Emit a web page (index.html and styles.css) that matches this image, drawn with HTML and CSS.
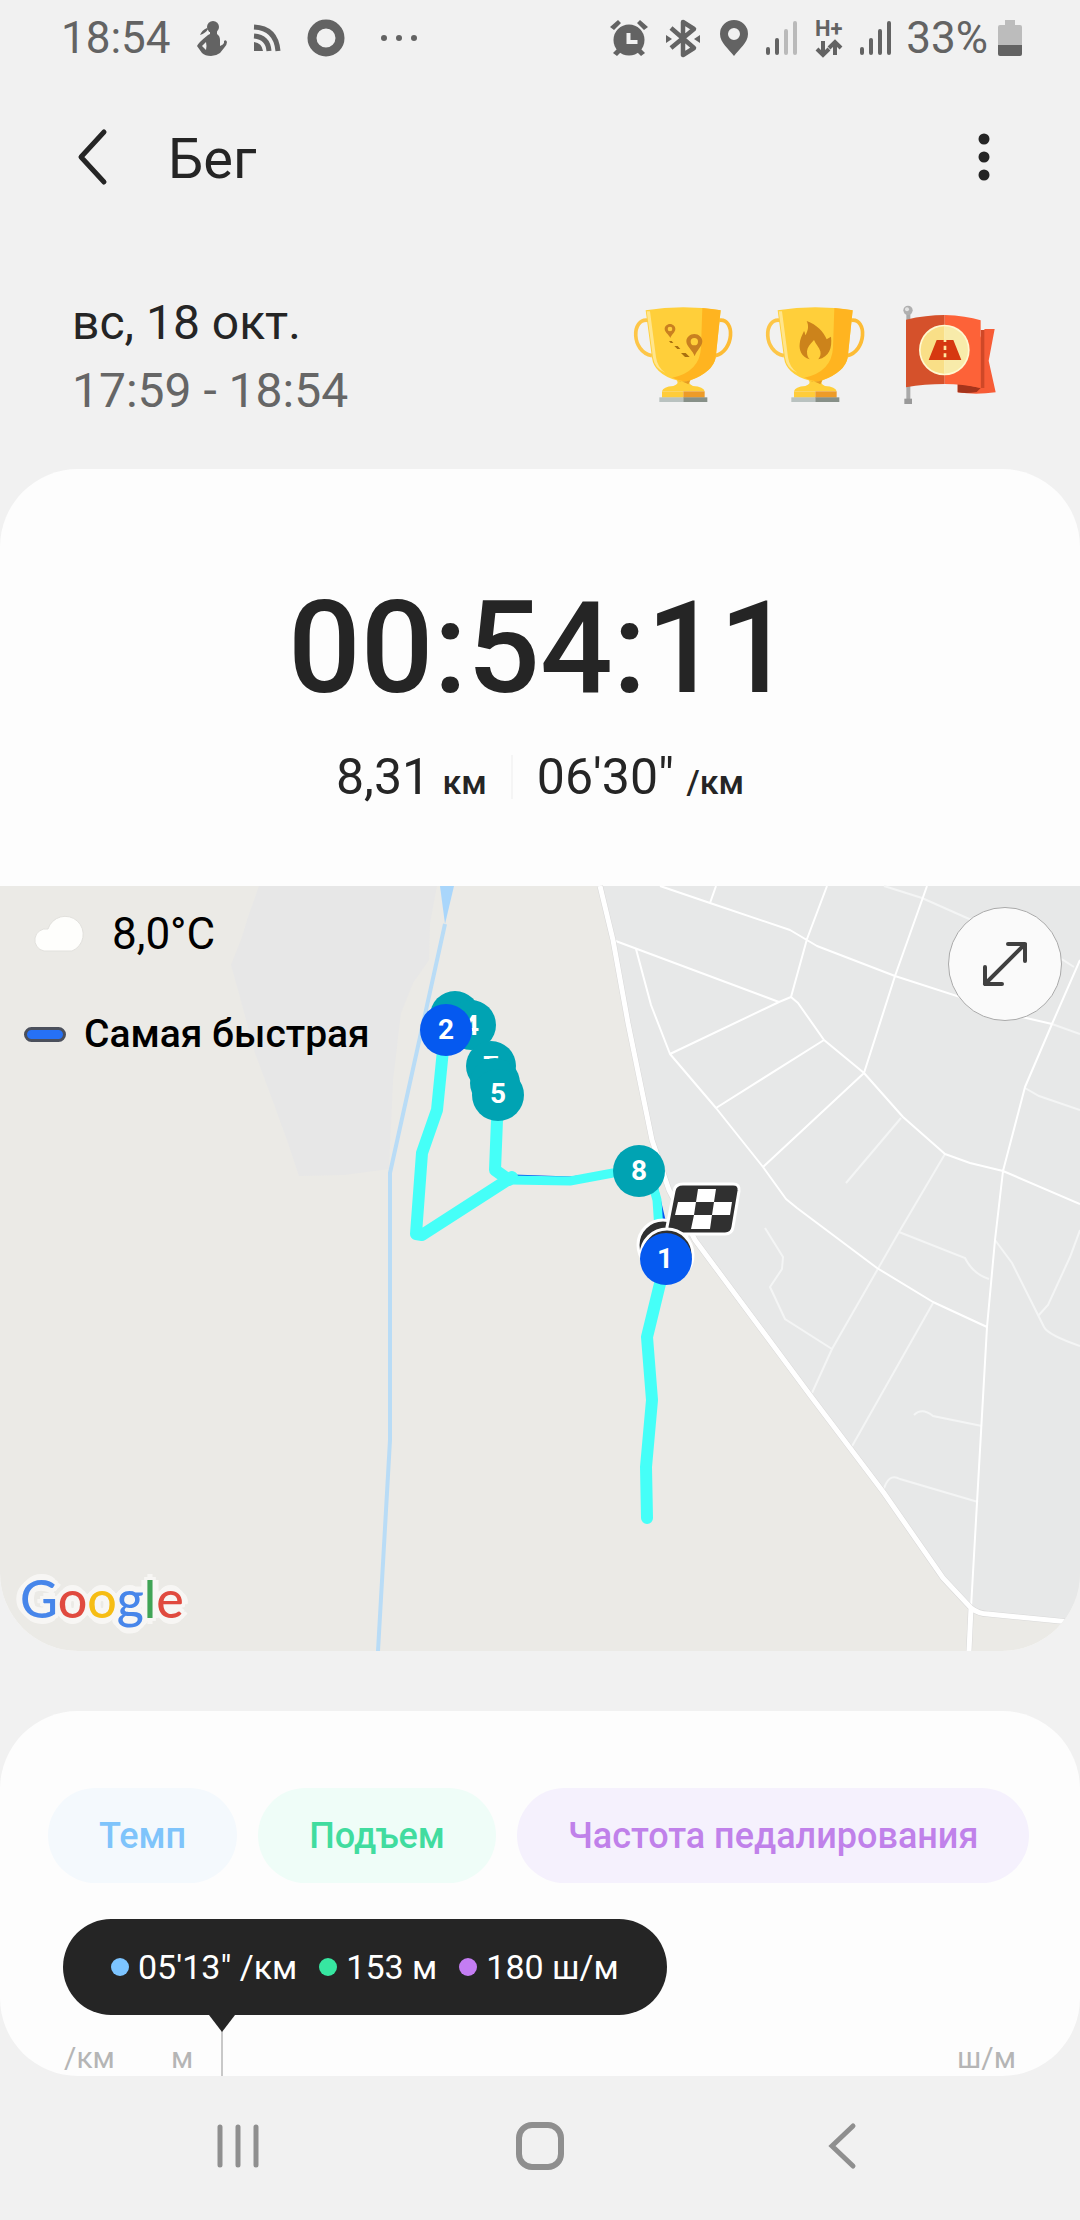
FILE: index.html
```html
<!DOCTYPE html>
<html lang="ru">
<head>
<meta charset="utf-8">
<meta name="viewport" content="width=device-width, initial-scale=1">
<title>Бег</title>
<link rel="stylesheet" href="styles.css">
</head>
<body>
<div class="screen">
  <div class="status-bar">
    <div class="status-group status-left">
      <span>18:54</span>
      <svg width="30" height="36" viewBox="0 0 30 36" fill="#636363"><circle cx="16" cy="7" r="6"/><path fill-rule="evenodd" d="M13 10h7v4q3 2 3 6v6q3-1 4-3v-2q2-2 3 1 0 3-3 6l-4 5q-4 3-9 3-6 0-9-3L0 26q1-3 11-11l2-1zM11 9q-2 4-8 6 2-5 7-7zM9 22l-4 4 4 4q1-4 0-8z"/></svg>
      <svg width="28" height="28" viewBox="0 0 28 28" fill="none" stroke="#636363" stroke-width="5"><path d="M1 3q22 1 24 24M1 12q14 1 15 15"/><path d="M1 18q8 1 9 9H1z" fill="#636363" stroke="none"/></svg>
      <svg width="38" height="38" viewBox="0 0 38 38"><circle cx="19" cy="19" r="14" fill="none" stroke="#636363" stroke-width="9"/></svg>
      <svg width="36" height="8" viewBox="0 0 36 8" fill="#636363"><circle cx="3" cy="4" r="3"/><circle cx="18" cy="4" r="3"/><circle cx="33" cy="4" r="3"/></svg>
    </div>
    <div class="status-group status-right">
      <svg width="38" height="36" viewBox="0 0 38 36" fill="#636363"><circle cx="19" cy="20" r="15.500"/><path d="M8 0l3 3-7 7-4-3zM30 0l8 7-4 3-7-7zM7 29l4 3-4 4-4-3zM31 29l4 4-4 3-4-4z"/><path d="M18.500 13v9h9" fill="none" stroke="#f1f1f1" stroke-width="4"/></svg>
      <svg width="36" height="38" viewBox="0 0 36 38"><path d="M5 9l23 20-11 7V3l11 7L5 29" fill="none" stroke="#636363" stroke-width="4.500" stroke-linejoin="round"/><path d="M0 16l6 4-6 4zM34 16l-6 4 6 4z" fill="#636363"/></svg>
      <svg width="28" height="36" viewBox="0 0 28 36"><path fill="#636363" fill-rule="evenodd" d="M14 0a14 14 0 0 1 14 14c0 9-9 15-14 22C9 29 0 23 0 14A14 14 0 0 1 14 0zm0 8a6 6 0 1 0 0 12 6 6 0 0 0 0-12z"/></svg>
      <svg width="32" height="34" viewBox="0 0 32 34" stroke-width="4" stroke-linecap="round" stroke="#636363"><path d="M2 28v4M11 19v13"/><path d="M20 10v22M29 2v30" stroke="#bababa"/></svg>
      <svg width="26" height="38" viewBox="0 0 26 38"><text x="-1" y="17" class="network">H+</text><path d="M7 22v12M1 30l6 6 6-6M19 36V24M13 29l6-6 6 6" fill="none" stroke="#636363" stroke-width="4"/></svg>
      <svg width="32" height="34" viewBox="0 0 32 34" stroke-width="4" stroke-linecap="round" stroke="#636363"><path d="M2 28v4M11 19v13M20 10v22M29 2v30"/></svg>
      <span class="battery"><span>33%</span>
      <svg width="24" height="36" viewBox="0 0 24 36"><path d="M7 0h10v5h5q2 0 2 2v18H0V7q0-2 2-2h5z" fill="#bcbcbc"/><path d="M0 25h24v9q0 2-2 2H2q-2 0-2-2z" fill="#636363"/></svg></span>
    </div>
  </div>

  <header class="app-bar">
    <button class="icon-button" aria-label="Назад"><svg width="32" height="56" viewBox="0 0 32 56"><path d="M28 3L5 28l23 25" fill="none" stroke="#252525" stroke-width="5" stroke-linecap="round" stroke-linejoin="round"/></svg></button>
    <h1>Бег</h1>
    <button class="icon-button more" aria-label="Ещё"><svg width="12" height="48" viewBox="0 0 12 48" fill="#252525"><circle cx="6" cy="6" r="5.500"/><circle cx="6" cy="24" r="5.500"/><circle cx="6" cy="42" r="5.500"/></svg></button>
  </header>

  <section class="summary">
    <div>
      <div class="date">вс, 18 окт.</div>
      <div class="period">17:59 - 18:54</div>
    </div>
    <div class="awards">
      <svg width="100" height="98" viewBox="100 78 300 294">
        <defs><g id="cup">
          <path d="M142 121c-50-8-52 94 12 106" fill="none" stroke="#fdc648" stroke-width="11"/><path d="M355 121c50-8 46 94-12 106" fill="none" stroke="#fdbc35" stroke-width="11"/>
          <path d="M135 91q113-18 225 0l-15 142q-8 42-76 68-8 11 8 17 32 2 35 16H184q3-14 34-16 19-6 10-17-68-20-74-68z" fill="#ffcf3a"/>
          <path d="M305 84q30 2 55 7l-15 142q-8 42-76 68-10 6-34 0l-20-8q82-18 86-90z" fill="#ffb420"/>
          <path d="M138 94h10l18 138q5 32 28 46-32-12-37-45z" fill="#ffe58c"/>
          <path d="M231 302q18 6 38-1l-6 12q-10-8-32-11z" fill="#e59a22"/>
          <path d="M184 334h64v19h-64z" fill="#ffcc3b"/><path d="M248 334h64v19h-64z" fill="#ed9b28"/>
          <path d="M176 352h72v14h-72z" fill="#b9c2c0"/><path d="M248 352h72v14h-72z" fill="#879088"/>
        </g></defs>
        <use href="#cup"/>
        <path fill="#c98020" fill-rule="evenodd" d="M208 132c9 0 16 7 16 15 0 10-12 17-15 27-4-10-17-17-17-27 0-8 7-15 16-15zm0 8a7 7 0 1 0 0 14 7 7 0 0 0 0-14zM281 162c13 0 24 10 24 22 0 16-18 28-23 45-5-17-25-29-25-45 0-12 11-22 24-22zm0 12a11 11 0 1 0 0 22 11 11 0 0 0 0-22z"/>
        <path d="M205 183h8l5 6h-8zM221 198h10l8 9h-9zM241 219h14l12 12h-14z" fill="#a8700f"/>
      </svg>
      <svg width="100" height="98" viewBox="100 78 300 294">
        <use href="#cup"/>
        <path d="M222 123c30 10 52 34 60 55l13-8c4 34-5 60-38 68 6-8 8-14 6-24-3-12-14-22-19-34-12 12-20 22-21 34 0 12 2 18 8 24-25-8-32-28-30-46 1-14 7-26 13-39 3 4 3 10 4 13 9-16 11-28 4-43z" fill="#cc831b"/>
      </svg>
      <svg width="98" height="98" viewBox="892 78 294 294">
        <path d="M917 100h12v260h-12z" fill="#a9a9a9"/><circle cx="922" cy="91" r="14" fill="#b0b0b0"/><circle cx="919" cy="88" r="6" fill="#e3e3e3"/><path d="M911 356h23v16h-23z" fill="#999"/>
        <path d="M1071 300l81-153h30l-18 95 21 95q-60 8-114 0z" fill="#f75c36"/><path d="M1140 150h11v174h-11z" fill="#cf4827"/><path d="M1071 310l69 14-12 12q-30 6-57 1z" fill="#a5341b"/>
        <path d="M916 119q60-14 116-14v207q-60 0-116 10z" fill="#d5512b"/><path d="M1032 105q64 2 108 16v203q-54-12-108-12z" fill="#fd6238"/>
        <circle cx="1031" cy="210" r="76" fill="#fff8d0"/><path d="M1031 139a71 71 0 0 0 0 142z" fill="#f9df87"/><path d="M1031 139a71 71 0 0 1 0 142z" fill="#f8ebaa"/>
        <path d="M1008 180h50l24 60h-98z" fill="#d63810"/><path d="M1029 179h8v7h-8zM1029 197h8v13h-8zM1029 220h8v12h-8z" fill="#ffe8a0"/>
      </svg>
    </div>
  </section>

  <main>
    <section class="card workout">
      <div class="timer">00:54:11</div>
      <div class="stats">
        <div class="stat">8,31 <small>км</small></div>
        <div class="stat-divider"></div>
        <div class="stat">06'30" <small>/км</small></div>
      </div>
      <div class="map">
        <svg class="map-canvas" viewBox="0 0 1080 765" preserveAspectRatio="xMidYMid slice">
          <path d="M0 0h1080v765H0z" fill="#ebeae6"/>
          <path d="M259 0l-11 31-7 23-10 25 7 25 17 63 20 54 13 36 11 33 45-1 45-6 4-89 8-67 12-30 16-23 1-37 7-37z" fill="#e7e7e7"/>
          <path d="M600 0l13 54 15 83 24 117 17 50 26 50 115 155 74 98 59 85 28 30 17 6 92 9V0z" fill="#e7e8e8"/>
          <path d="M440 0h14l-9 38z" fill="#a9d6fb"/>
          <path d="M445 38l-55 249v267l-12 211" fill="none" stroke="#b9dcf6" stroke-width="4"/>
          <g fill="none" stroke="#f4f5f5" stroke-width="2">
            <path d="M884 0l38 12 45 20 96 42 11 7M1052 138l28 10M1025 202l14 8 41 14M901 232l-55 65M945 268l-46 78-67 117-20 44M899 346l66 26q8 16 24 21M765 342l18 29-1 12-12 18 15 32 47 30M933 417l-82 145M914 529q8-8 19 1l49 10M883 606q5-20 17-13l78 23M995 354l17 23 32 64q4 8 36 19M1038 430l10-11 22-48 10-27"/>
          </g>
          <g fill="none" stroke="#fff" stroke-width="2" stroke-linejoin="round">
            <path d="M660 0l50 17 80 27 27 16 78 30 127 41 30 7M716 0l-6 17M827 0l-20 53-16 58-12 5L613 54M791 111l7 6 26 37 40 33 39 44 42 37 25 9 33 8 77 33M927 0l-32 90-31 97-101 94M636 63l15 56 19 49 46 54 47 59 23 32 11 9 80 60 56 34 54 25M670 168l109-52M716 222l108-68M1080 74l-28 64-27 63-22 84-8 69-8 87-16 281"/>
          </g>
          <path d="M600 0l13 54 15 83 24 117 17 50 26 50 115 155 74 98 59 85 28 30q8 6 17 6l92 9M971 722l-2 43" fill="none" stroke="#d8d8d8" stroke-width="6"/>
          <path d="M600 0l13 54 15 83 24 117 17 50 26 50 115 155 74 98 59 85 28 30q8 6 17 6l92 9M971 722l-2 43" fill="none" stroke="#fff" stroke-width="5"/>
          <g fill="none" stroke-linejoin="round" stroke-linecap="round">
            <path d="M507 293l6-2 57 2 43-5 26-1M655 300l8 34" stroke="#0559f0" stroke-width="5"/>
            <path d="M510 294l60 1 43-8 26-1M652 296l5 18 2 30" stroke="#45fff8" stroke-width="9"/>
            <path d="M445 144l-3 30-5 50-15 43-6 81 6 1 90-58M498 209l-3 75 14 10M666 373l-19 78 5 63-6 67 1 51" stroke="#45fff8" stroke-width="12"/>
          </g>
          <g fill="#303030" stroke="#fff" stroke-width="3">
            <circle cx="663" cy="359" r="25"/>
            <path d="M683 298h50q7 0 6 7l-6 36q-1 7-8 7h-52q-7 0-6-7l7-36q1-7 9-7z"/>
            <path d="M698 303h18l-2 13h-18zM678 316h18l-2 13h-19zM714 316h18l-2 13h-18zM694 329h18l-2 14h-19z" fill="#fff" stroke="none"/>
            <circle cx="667" cy="369" r="26"/>
          </g>
          <g class="marks">
            <circle cx="455" cy="130" r="25" fill="#00a3b3"/><text x="455" y="140">3</text>
            <circle cx="471" cy="139" r="25" fill="#00a3b3"/><text x="471" y="149">4</text>
            <circle cx="446" cy="144" r="26" fill="#0559f0"/><text x="446" y="153">2</text>
            <circle cx="491" cy="180" r="25" fill="#00a3b3"/><text x="491" y="190">7</text>
            <circle cx="495" cy="197" r="25" fill="#00a3b3"/>
            <circle cx="498" cy="209" r="26" fill="#00a3b3"/><text x="498" y="217">5</text>
            <circle cx="639" cy="285" r="26" fill="#00a3b3"/><text x="639" y="294">8</text>
            <circle cx="666" cy="373" r="26" fill="#0559f0"/><text x="665" y="382">1</text>
          </g>
        </svg>
        <div class="map-info">
          <div class="weather">
            <svg width="52" height="36" viewBox="0 0 52 36"><path d="M12 35a11 11 0 1 1 4-22 18 18 0 1 1 24 22z" fill="#fefefc" stroke="#e2e1dd"/></svg>
            <span>8,0°C</span>
          </div>
          <div class="legend"><span class="swatch"></span>Самая быстрая</div>
        </div>
        <button class="expand" aria-label="Развернуть карту"><svg width="46" height="46" viewBox="0 0 46 46"><path d="M3 43L43 3M26 3h17v17M3 26v17h17" fill="none" stroke="#404040" stroke-width="4" stroke-linecap="round" stroke-linejoin="round"/></svg></button>
        <svg class="map-logo" width="180" height="72" viewBox="0 0 180 72" aria-label="Google"><text x="4" y="53"><tspan fill="#4786ea">G</tspan><tspan fill="#e04a3f">o</tspan><tspan fill="#f6bd14">o</tspan><tspan fill="#4786ea">g</tspan><tspan fill="#40a456">l</tspan><tspan fill="#e04a3f">e</tspan></text></svg>
      </div>
    </section>

    <section class="card chart">
      <div class="chips">
        <button class="chip pace">Темп</button>
        <button class="chip climb">Подъем</button>
        <button class="chip cadence">Частота педалирования</button>
      </div>
      <div class="tooltip">
        <span class="value pace">05'13" /км</span>
        <span class="value climb">153 м</span>
        <span class="value cadence">180 ш/м</span>
      </div>
      <div class="axes"><span class="axis-first">/км</span><span>м</span><span class="axis-last">ш/м</span></div>
    </section>
  </main>

  <nav class="nav-bar">
    <button class="icon-button" aria-label="Недавние"><svg width="44" height="48" viewBox="0 0 44 48"><path d="M4 5v38M22 5v38M40 5v38" stroke="#8f8f8f" stroke-width="5" stroke-linecap="round"/></svg></button>
    <button class="icon-button" aria-label="Домой"><svg width="48" height="48" viewBox="0 0 48 48"><rect x="3" y="3" width="42" height="42" rx="13" fill="none" stroke="#8f8f8f" stroke-width="6"/></svg></button>
    <button class="icon-button" aria-label="Назад"><svg width="28" height="48" viewBox="0 0 28 48"><path d="M25 4L4 24l21 20" fill="none" stroke="#8f8f8f" stroke-width="5" stroke-linecap="round"/></svg></button>
  </nav>
</div>
</body>
</html>
```
FILE: styles.css
```css
* { box-sizing: border-box; }

body {
  margin: 0;
  background: #f1f1f1;
  color: #252525;
  font-family: Roboto, "Noto Sans", sans-serif;
}

svg { display: block; flex: none; overflow: visible; }

button {
  border: 0;
  padding: 0;
  background: none;
  color: inherit;
  font: inherit;
}

.screen {
  display: flex;
  flex-direction: column;
  min-height: 100vh;
}

.status-bar {
  display: flex;
  justify-content: space-between;
  align-items: center;
  height: 74px;
  padding: 2px 58px 0 61px;
  color: #636363;
  font-size: 44px;
}

.status-group { display: flex; align-items: center; }
.status-left { gap: 26px; }
.status-left svg:last-child { margin-left: 10px; }
.status-right { gap: 18px; }

.battery {
  display: flex;
  align-items: center;
  gap: 10px;
  margin-left: -4px;
}

.network {
  fill: #636363;
  font-size: 22px;
  font-weight: 700;
}

.app-bar {
  display: flex;
  align-items: center;
  height: 166px;
  padding: 0 90px 0 76px;
}

.app-bar h1 {
  margin: 0 0 0 60px;
  padding-top: 4px;
  font-size: 56px;
  font-weight: 400;
}

.icon-button {
  display: flex;
  align-items: center;
  justify-content: center;
}

.more { margin-left: auto; }

.summary {
  display: flex;
  justify-content: space-between;
  align-items: center;
  padding: 49px 84px 44px 72px;
  font-size: 48px;
  line-height: 68px;
}

.period { color: #666; }

.awards {
  display: flex;
  gap: 32px;
  padding-bottom: 4px;
}

.card {
  overflow: hidden;
  border-radius: 78px;
  background: #fdfdfd;
}

.timer {
  padding-top: 119px;
  font-size: 128px;
  font-weight: 500;
  line-height: 120px;
  text-align: center;
}

.stats {
  display: flex;
  justify-content: center;
  align-items: center;
  gap: 24px;
  height: 178px;
  padding: 39px 0 79px;
  font-size: 50px;
  line-height: 60px;
}

.stats small {
  font-size: 34px;
  font-weight: 500;
  line-height: 34px;
}

.stat-divider {
  width: 2px;
  height: 44px;
  background: #f5f5f5;
}

.map {
  position: relative;
  height: 765px;
  color: #000;
}

.map-canvas {
  position: absolute;
  inset: 0;
  width: 100%;
  height: 100%;
}

.marks text {
  fill: #fff;
  font-size: 28px;
  font-weight: 700;
  text-anchor: middle;
}

.map-info {
  position: relative;
  padding: 16px 24px;
}

.weather {
  display: flex;
  align-items: center;
  gap: 28px;
  padding-left: 8px;
  font-size: 44px;
  line-height: 64px;
}

.legend {
  display: flex;
  align-items: center;
  gap: 18px;
  margin-top: 36px;
  font-size: 39px;
  font-weight: 500;
  line-height: 64px;
}

.swatch {
  width: 42px;
  height: 15px;
  border: 3px solid #4b505c;
  border-radius: 8px;
  background: #2671f5;
}

.expand {
  position: absolute;
  top: 21px;
  right: 18px;
  display: flex;
  align-items: center;
  justify-content: center;
  width: 114px;
  height: 114px;
  border: 1px solid #aaa;
  border-radius: 50%;
  background: #fafafa;
}

.map-logo {
  position: absolute;
  left: 16px;
  bottom: 14px;
  filter: drop-shadow(3px 3px 0 #f7f6f4) drop-shadow(-3px -3px 0 #f7f6f4) drop-shadow(3px -3px 0 #f7f6f4) drop-shadow(-3px 3px 0 #f7f6f4);
}

.map-logo text {
  font-family: Lato, sans-serif;
  font-size: 52px;
  font-weight: 500;
}

.chart {
  margin-top: 60px;
  padding: 77px 40px 0 48px;
}

.chips { display: flex; gap: 21px; }

.chip {
  height: 95px;
  padding: 0 51px;
  border-radius: 48px;
  font-size: 36px;
  font-weight: 500;
  white-space: nowrap;
}

.chip.pace { background: #f4f9fd; color: #7fc4fb; }
.chip.climb { background: #effdf8; color: #41dc9f; }
.chip.cadence { background: #f5f1fd; color: #c081ea; }

.tooltip {
  position: relative;
  display: flex;
  align-items: center;
  gap: 22px;
  width: max-content;
  height: 96px;
  margin: 36px 0 0 15px;
  padding: 0 48px;
  border-radius: 48px;
  background: #252525;
  color: #fff;
  font-size: 34px;
}

/* pointer and guide line below the bubble */
.tooltip::before,
.tooltip::after {
  content: "";
  position: absolute;
  top: 100%;
  left: 159px;
}

.tooltip::before {
  width: 2px;
  height: 64px;
  margin-left: -1px;
  background: #c8c8c8;
}

.tooltip::after {
  margin-left: -13px;
  border: 13px solid transparent;
  border-top: 17px solid #252525;
  border-bottom: 0;
}

.value { display: flex; align-items: center; gap: 9px; }

.value::before {
  content: "";
  width: 18px;
  height: 18px;
  border-radius: 50%;
}

.value.pace::before { background: #7cc4ff; }
.value.climb::before { background: #37e6a1; }
.value.cadence::before { background: #c47df3; }

.axes {
  display: flex;
  align-items: flex-end;
  height: 61px;
  padding: 0 24px 0 16px;
  color: #b5b5b5;
  font-size: 30px;
  line-height: 36px;
}

.axis-first { width: 107px; }
.axis-last { margin-left: auto; }

.nav-bar {
  display: grid;
  grid-template-columns: repeat(3, 1fr);
  flex: 1;
  align-items: center;
  min-height: 136px;
  padding: 0 87px 4px;
}
```
